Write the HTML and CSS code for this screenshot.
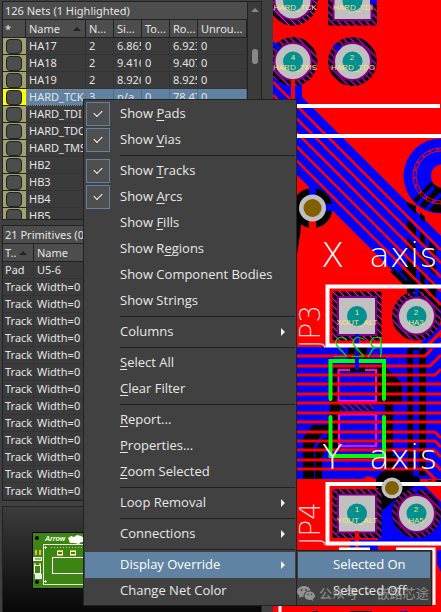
FILE: index.html
```html
<!DOCTYPE html>
<html lang="en">
<head>
<meta charset="utf-8">
<title>PCB Nets</title>
<link rel="stylesheet" href="styles.css">
</head>
<body>
<main class="app">
  <aside class="side">
    <section class="panel nets">
      <div class="nets-main">
        <h2 class="title">126 Nets (1 Highlighted)</h2>
        <table class="grid">
          <colgroup><col class="c-mark"><col class="c-name"><col class="c-num"><col class="c-num"><col class="c-num"><col class="c-num"><col></colgroup>
          <thead><tr><th>*</th><th>Name <i class="sort"></i></th><th>N...</th><th>Si...</th><th>To...</th><th>Ro...</th><th>Unrou...</th></tr></thead>
          <tbody>
            <tr><td class="mark"><input type="checkbox" aria-label="HA17"></td><td>HA17</td><td>2</td><td>6.865</td><td>0</td><td>6.923</td><td>0</td></tr>
            <tr><td class="mark"><input type="checkbox" aria-label="HA18"></td><td>HA18</td><td>2</td><td>9.416</td><td>0</td><td>9.407</td><td>0</td></tr>
            <tr><td class="mark"><input type="checkbox" aria-label="HA19"></td><td>HA19</td><td>2</td><td>8.926</td><td>0</td><td>8.925</td><td>0</td></tr>
            <tr class="selected"><td class="mark"><input type="checkbox" aria-label="HARD_TCK"></td><td>HARD_TCK</td><td>3</td><td>n/a</td><td>0</td><td>78.47</td><td>0</td></tr>
            <tr><td class="mark"><input type="checkbox" aria-label="HARD_TDI"></td><td>HARD_TDI</td><td></td><td></td><td></td><td></td><td></td></tr>
            <tr><td class="mark"><input type="checkbox" aria-label="HARD_TDO"></td><td>HARD_TDO</td><td></td><td></td><td></td><td></td><td></td></tr>
            <tr><td class="mark"><input type="checkbox" aria-label="HARD_TMS"></td><td>HARD_TMS</td><td></td><td></td><td></td><td></td><td></td></tr>
            <tr><td class="mark"><input type="checkbox" aria-label="HB2"></td><td>HB2</td><td></td><td></td><td></td><td></td><td></td></tr>
            <tr><td class="mark"><input type="checkbox" aria-label="HB3"></td><td>HB3</td><td></td><td></td><td></td><td></td><td></td></tr>
            <tr><td class="mark"><input type="checkbox" aria-label="HB4"></td><td>HB4</td><td></td><td></td><td></td><td></td><td></td></tr>
            <tr><td class="mark"><input type="checkbox" aria-label="HB5"></td><td>HB5</td><td></td><td></td><td></td><td></td><td></td></tr>
          </tbody>
        </table>
      </div>
      <div class="scroll"><i class="up"></i><i class="thumb"></i></div>
    </section>
    <section class="panel prims">
      <h2 class="title">21 Primitives (0</h2>
      <table class="grid">
        <colgroup><col class="c-type"><col></colgroup>
        <thead><tr><th>T.. <i class="sort"></i></th><th>Name</th></tr></thead>
        <tbody>
          <tr><td>Pad</td><td>U5-6</td></tr>
          <tr><td>Track</td><td>Width=0</td></tr>
          <tr><td>Track</td><td>Width=0</td></tr>
          <tr><td>Track</td><td>Width=0</td></tr>
          <tr><td>Track</td><td>Width=0</td></tr>
          <tr><td>Track</td><td>Width=0</td></tr>
          <tr><td>Track</td><td>Width=0</td></tr>
          <tr><td>Track</td><td>Width=0</td></tr>
          <tr><td>Track</td><td>Width=0</td></tr>
          <tr><td>Track</td><td>Width=0</td></tr>
          <tr><td>Track</td><td>Width=0</td></tr>
          <tr><td>Track</td><td>Width=0</td></tr>
          <tr><td>Track</td><td>Width=0</td></tr>
          <tr><td>Track</td><td>Width=0</td></tr>
        </tbody>
      </table>
    </section>
    <section class="panel preview">
      <svg class="board" width="200" height="58" viewBox="0 0 200 58" aria-hidden="true">
        <rect x=".5" y=".5" width="199" height="56" fill="#3c8512" stroke="#000"/>
        <circle cx="5" cy="6" r="2"/><circle cx="5" cy="50" r="2"/>
        <text x="13" y="9" class="brand">Arrow</text>
        <path d="M36 6l3-2 3 1 3-2 4 1 4 2 4 2-3 2-5 0-2 2-5-1-4 0z" fill="#fff"/>
        <rect x="11.500" y="12.500" width="180" height="40" fill="none" stroke="#e8efe2"/>
        <path d="M19 15.500h180" stroke="#b5cfa3" stroke-dasharray="1 2"/>
        <path d="M12 15.500h3M13.500 14v3M12 49.500h3M13.500 48v3" stroke="#d3e2c8"/>
        <rect x="20.500" y="25.500" width="160" height="16" fill="none" stroke="#fff"/>
        <g fill="#e8efe2"><rect x="25" y="18" width="6" height="6"/><rect x="38" y="18" width="6" height="6"/><rect x="1" y="25" width="9" height="4"/><rect x="3" y="42" width="7" height="5"/></g>
        <g fill="#f2b63a"><path d="M25 18h6v1h-6zM25 23h6v1h-6zM38 18h6v1h-6zM38 23h6v1h-6zM3 18h2v5h-2zM7 18h2v5h-2zM2 31h2v2h-2zM7 31h2v2h-2z"/></g>
        <rect x="26" y="20" width="4" height="2" fill="#3c8512"/><rect x="39" y="20" width="4" height="2" fill="#3c8512"/>
        <rect x="2.500" y="33.500" width="6" height="8" fill="none" stroke="#fff"/><path d="M3 27h6" stroke="#3c8512"/>
      </svg>
    </section>
  </aside>
  <section class="canvas" aria-label="PCB layout">
    <svg class="pcb" viewBox="273 0 168 612" preserveAspectRatio="xMinYMin slice">
      <defs>
        <pattern id="h" width="7" height="7" patternUnits="userSpaceOnUse"><rect width="7" height="7" fill="#000"/><path d="M-1-1l9 9M-1 6l2 2M6-1l2 2" stroke="#ff00ff" stroke-width="1.200"/></pattern>
        <g id="round"><circle r="24.500" fill="url(#h)"/><circle r="19.500" fill="#800080"/><circle r="17.500" fill="#c0c0c0"/><circle r="10" fill="#009090"/></g>
        <g id="square"><rect x="-24.500" y="-24.500" width="49" height="49" fill="url(#h)"/><rect x="-20" y="-20" width="40" height="40" fill="#800080"/><rect x="-18" y="-18" width="36" height="36" fill="#c0c0c0"/><circle r="10" fill="#009090"/></g>
      </defs>
      <rect x="273" width="168" height="612" fill="#f00"/>

      <!-- diagonal bus -->
      <path d="M273 42l7 2 6 8-4 4-9-8zM273 77l10 7h19v13l139 139v83L273 151z" fill="#00f"/>
      <path d="M293 76v24" stroke="#f00" stroke-width="4"/>
      <path d="M273 82l168 168M273 95l168 168M273 109l168 168M273 123l168 168M273 137l168 168" stroke="#f00" stroke-width="2.500"/>
      <path d="M407 202l9 4v96h-9zM420 212l5 5v85h-5zM429 226l7 8v70h-7z"/>
      <path d="M402 270l39 39M392 270l49 49" stroke="#000" stroke-width="5"/>
      <path d="M402 200l39 39v14l-39-39zM402 224l39 39v8l-39-39zM402 242l39 39v8l-39-39z" fill="#00f"/>
      <path d="M402 211l39 39M402 224l39 39M402 238l39 39M402 252l39 39M402 266l39 39" stroke="#f00" stroke-width="2.500"/>

      <!-- mounting hole -->
      <circle cx="441" cy="176" r="37.500" fill="#00f"/>
      <path d="M413 200l18-18 10 5v26q-15-1-28-13z"/>
      <path d="M417 205l17-18M426 210l15-16" stroke="#00f" stroke-width="4"/>
      <circle cx="441" cy="176" r="28" fill="none" stroke="#f00"/><circle cx="441" cy="176" r="25" fill="none" stroke="#f00"/>
      <circle cx="441" cy="176" r="26.500" fill="none" stroke="#f00" stroke-width="2" stroke-dasharray="2 6"/>
      <circle cx="443" cy="176" r="12" fill="#f00"/>

      <use href="#round" x="293" y="1"/><use href="#square" x="352.500" y="1"/>
      <path d="M370 0h7v4h-7z" fill="#00f"/>
      <use href="#round" x="293" y="61.500"/><use href="#round" x="352.500" y="61.500"/>
      <path d="M336 43l5 5-3 3-5-5zM273 43l4 0 4 5-3 3-5-5z" fill="#00f"/>
      <path d="M293 79v20" stroke="#f00" stroke-width="4"/>
      <g class="pin"><text x="295" y="10">HARD_TCK</text><text x="353" y="10">HARD_TDI</text><text x="293" y="60">4</text><text x="295" y="70">HARD_TMS</text><text x="352" y="60">2</text><text x="353" y="70">HARD_TDO</text></g>
      <path d="M273 106h167M273 136h168" stroke="#fff" stroke-width="4"/>

      <!-- via -->
      <path d="M297 195v59l4-26z"/>
      <circle cx="312.500" cy="208" r="20"/>
      <path d="M309 186h7v10h-7zM325 204h13v7h-13z" fill="#00f"/><path d="M309 221h7v8h-7z" fill="#f00"/>
      <circle cx="312.500" cy="208" r="13.500" fill="#c0c0c0"/><circle cx="312.500" cy="208" r="9" fill="#806000"/>

      <g class="silk"><text x="321" y="267">X</text><text x="369" y="267">axis</text></g>

      <!-- horizontal bus -->
      <path d="M273 347h168v132h-65l-8-3-5 3h-90z" fill="#00f"/>
      <path d="M348 346h19v14h-19zM334 366h50l18 17v20h-9v73h-8v-71h-9v-9h-36v54h-14zM407 350l5-5h14v131h-6l-12-5zM420 350h6v120h-6zM303 479v-41l10-13h20v8h-10l-9 12v34zM315 450l8-12h6v10l-7 8v23h-7zM376 479q4-8 13-9v-14h7v14h14l10 9v9h-44z"/>
      <path d="M413 350h6v126h-6z" fill="#00f"/>
      <path d="M340 372h34v28h-34zM340 415h34v29h-34z" fill="#00f"/>
      <rect x="340" y="404" width="34" height="7" fill="url(#h)" opacity=".6"/>
      <g fill="none" stroke="#f0f" stroke-width="2"><path d="M350 370h-11.500v31h37.500v-31h-11M339 414.500h37v31.500h-37z"/></g>
      <path d="M297 356h128l16-16M297 366h133l11-11M297 375h138l6-6M297 384h144M297 394h144M297 403h144M297 413h144M297 422h144M297 432h138l6 6M297 441h138l6 6M297 450h137l7 7M297 460h134l10 10M297 469h128l16 16" fill="none" stroke="#f00" stroke-width="3"/>
      <path d="M330.500 399v-38h53.500v38M330.500 417v39h53.500v-39" fill="none" stroke="#0f0" stroke-width="4" stroke-linecap="round"/>
      <g class="silk"><text x="322" y="469">Y</text><text x="369" y="469">axis</text></g>

      <!-- JP3 -->
      <path d="M441 326l-22 22M441 338l-10 10" stroke="#00f" stroke-width="5"/>
      <use href="#square" x="357" y="316"/><use href="#round" x="416.500" y="316"/>
      <path d="M416.500 286v11" stroke="#00f" stroke-width="3"/>
      <path d="M357 334v36" stroke="#00f" stroke-width="4"/>
      <path d="M450 286.500H327.500v59H450" fill="none" stroke="#fff" stroke-width="4"/>
      <g class="pin"><text x="357" y="315">1</text><text x="357" y="325">XOUT_ALT</text><text x="416" y="315">2</text><text x="416" y="325">HA3</text></g>
      <text class="ref" transform="translate(320 348) rotate(-90)">JP3</text>
      <text class="mirror" transform="scale(-1 1)" x="-385" y="357">R22</text>

      <!-- JP4 -->
      <path d="M378 486h63v57h-63z" fill="#00f"/>
      <path d="M378 486h36l-24 18-12 10zM428 480h13v12z"/>
      <path d="M425 486l16 16v-17l-8-6z" fill="#f00"/>
      <use href="#square" x="357" y="513.500"/><use href="#round" x="416.500" y="513.500"/>
      <path d="M416.500 483v11" stroke="#00f" stroke-width="3"/>
      <path d="M350 540h28v10h-28z" fill="#00f"/>
      <path d="M357 531v18" stroke="#f00" stroke-width="4"/>
      <path d="M450 484H327.500v59.500H450" fill="none" stroke="#fff" stroke-width="4"/>
      <circle cx="392" cy="488" r="10.500" fill="#c0c0c0"/><circle cx="392" cy="488" r="7" fill="#806000"/>
      <g class="pin"><text x="357" y="512">1</text><text x="357" y="523">YOUT_ALT</text><text x="416" y="512">2</text><text x="416" y="523">HA5</text></g>
      <text class="ref" transform="translate(320 545) rotate(-90)">JP4</text>

      <path d="M437 550h4v22l-4-8z" fill="#00f"/>
      <path d="M339 549h31M396 549h38v56M280 604v8" fill="none" stroke="#fff" stroke-width="3"/>
      <path d="M312 611h6v1h-6zM350 611h22v1h-22z"/><path d="M400 611h8v1h-8z" fill="#00f"/>
    </svg>
  </section>

  <menu class="menu main-menu">
    <li><button class="checked"><span>Show <u>P</u>ads</span></button></li>
    <li><button class="checked"><span>Show <u>V</u>ias</span></button></li>
    <li class="sep"></li>
    <li><button class="checked"><span>Show <u>T</u>racks</span></button></li>
    <li><button class="checked"><span>Show <u>A</u>rcs</span></button></li>
    <li><button><span>Show <u>F</u>ills</span></button></li>
    <li><button><span>Show R<u>e</u>gions</span></button></li>
    <li><button><span>Show Component Bodies</span></button></li>
    <li><button><span>Show Strings</span></button></li>
    <li class="sep"></li>
    <li><button class="more"><span>Columns</span></button></li>
    <li class="sep"></li>
    <li><button><span><u>S</u>elect All</span></button></li>
    <li><button><span><u>C</u>lear Filter</span></button></li>
    <li class="sep"></li>
    <li><button><span><u>R</u>eport...</span></button></li>
    <li><button><span><u>P</u>roperties...</span></button></li>
    <li><button><span><u>Z</u>oom Selected</span></button></li>
    <li class="sep"></li>
    <li><button class="more"><span>Loop Removal</span></button></li>
    <li class="sep"></li>
    <li><button class="more"><span>Connections</span></button></li>
    <li class="sep"></li>
    <li><button class="more active"><span>Display Override</span></button></li>
    <li><button><span>Change Net Color</span></button></li>
  </menu>
  <menu class="menu sub-menu">
    <li><button class="active"><span>Selected On</span></button></li>
    <li><button><span>Selected Off</span></button></li>
  </menu>
  <div class="watermark" lang="zh">
    <svg width="18" height="15" viewBox="0 0 18 15" aria-hidden="true"><path d="M7 0C3 0 0 2.500 0 5.500c0 2 1 3.200 2.500 4.200L2 12l2.600-1.300 2 .3C6 7 9 4.500 13.500 4.500 13 2 10.500 0 7 0zM12.500 5.500c-3 0-5 2-5 4.300s2.200 4.200 5 4.200l1.700-.2 2 1.200-.5-1.800C17 12.300 18 11.200 18 9.800c0-2.300-2.300-4.300-5.500-4.300z" fill="currentColor"/><g fill="#414141"><circle cx="4.500" cy="4" r=".9"/><circle cx="9" cy="4" r=".9"/><circle cx="11" cy="8.500" r=".8"/><circle cx="14.500" cy="8.500" r=".8"/></g></svg>
    <span>公众号 · 嵌路芯途</span>
  </div>
</main>
</body>
</html>
```
FILE: styles.css
```css
*, *::before, *::after { box-sizing: border-box; }

body {
  margin: 0;
  background: #404040;
  color: #e4e4e4;
  font: 11px/16px "Noto Sans", "Open Sans", sans-serif;
}

.app {
  position: relative;
  display: grid;
  grid-template-columns: 273px 1fr;
  height: 100vh;
  overflow: hidden;
}

.side {
  display: flex;
  flex-direction: column;
  gap: 5px;
  min-height: 0;
  padding: 1px 11px 0 2px;
}

.panel {
  border: 1px solid #222;
  background: #3b3b3b;
  overflow: hidden;
}

.nets { display: flex; flex: 0 0 219px; }
.nets-main { flex: 1; min-width: 0; }
.prims { flex: none; }

.title {
  margin: 0;
  padding: 0 2px;
  height: 18px;
  border-bottom: 1px solid #222;
  background: #4d4d4d;
  font-size: 11px;
  font-weight: 400;
  line-height: 17px;
  white-space: nowrap;
}

.grid {
  width: 100%;
  table-layout: fixed;
  border-collapse: separate;
  border-spacing: 0;
}

.c-mark { width: 23px; }
.c-name { width: 60px; }
.c-num { width: 28px; }
.c-type { width: 31px; }

th, td {
  height: 17px;
  padding: 0 0 0 2px;
  overflow: hidden;
  border-right: 1px solid #343434;
  border-bottom: 1px solid #343434;
  font-weight: 400;
  line-height: 16px;
  text-align: left;
  white-space: nowrap;
}

td + td, th + th { padding-left: 3px; }

th {
  height: 18px;
  border-right-color: #222;
  border-bottom-color: #222;
  background: #4d4d4d;
}

.sort {
  display: inline-block;
  margin: 0 0 2px 10px;
  border: 4px solid transparent;
  border-top: 0;
  border-bottom-color: #222;
}

.prims .sort { margin-left: 0; }

.mark { padding: 0 4px 0 3px; background: #a0a070; }
td.mark { border-right: 0; border-bottom-color: #222; }

.mark input {
  display: block;
  appearance: none;
  width: 16px;
  height: 15px;
  margin: 0;
  border: 1px solid #222;
  border-radius: 4px;
  background: #4d4d4d;
}

.selected td { background: #6082a3; border-right-color: #4f6c88; }
.selected td.mark { background: #ff0; }
.selected td:nth-child(2) { outline: 1px dotted #a08870; outline-offset: -1px; }

.scroll {
  display: flex;
  flex: 0 0 14px;
  flex-direction: column;
  align-items: center;
  padding: 6px 0 0 1px;
  border-left: 1px solid #222;
}

.up { border: 4px solid transparent; border-top: 0; border-bottom-color: #888; }
.thumb { width: 6px; height: 15px; margin-top: 37px; border-radius: 3px; background: #888; }

.preview {
  flex: 1;
  padding: 25px 0 0 29px;
  border-bottom: 0;
  background: linear-gradient(#3c3c3c, #080808);
}

.board { display: block; }
.brand { fill: #fff; font: italic 700 7px "Liberation Sans", sans-serif; }

.canvas { min-width: 0; overflow: hidden; }
.pcb { display: block; width: 100%; height: 100%; }
.pin { fill: #ffe080; font: 8px "Liberation Sans", sans-serif; text-anchor: middle; }
.silk { fill: #fff; font: 200 34px "DejaVu Sans", sans-serif; }
.ref { fill: #ffd0d0; font: 200 28px "DejaVu Sans", sans-serif; }
.mirror { fill: #00d000; font: 200 27px "DejaVu Sans", sans-serif; }

.menu {
  position: absolute;
  margin: 0;
  padding: 1px;
  border: 1px solid #222;
  background: #414141;
  list-style: none;
}

.main-menu { top: 99px; left: 83px; width: 214px; }
.sub-menu { top: 550px; left: 296px; width: 136px; }

.menu button {
  display: flex;
  align-items: center;
  width: 100%;
  height: 26px;
  padding: 0 10px 0 35px;
  border: 0;
  background: none;
  color: #e8e8e8;
  font: 13px/20px "Open Sans", "Noto Sans", sans-serif;
  text-align: left;
  white-space: nowrap;
}

.menu span { padding-bottom: 2px; }
.menu u { text-decoration: underline 1px #e8e8e8; text-underline-offset: 2px; text-decoration-skip-ink: none; }
.menu .active { background: #6082a3; color: #fff; }

.menu .checked { position: relative; padding-left: 1px; }

.checked::before {
  content: "";
  width: 24px;
  height: 24px;
  margin-right: 10px;
  border: 1px solid #6082a3;
  background: #4f4f4f;
}

.checked::after {
  content: "";
  position: absolute;
  top: 9px;
  left: 9px;
  width: 8px;
  height: 5px;
  border: solid #fff;
  border-width: 0 0 1px 1px;
  transform: rotate(-45deg);
}

.more::after {
  content: "";
  margin-left: auto;
  border: 4px solid transparent;
  border-right: 0;
  border-left-color: #f0f0f0;
}

.sep { height: 5px; margin-left: 35px; border-bottom: 2px solid transparent; box-shadow: inset 0 -1px #222; }

.watermark {
  position: absolute;
  top: 583px;
  left: 297px;
  display: flex;
  align-items: center;
  gap: 4px;
  color: #c8c8c8;
  font: 13px/20px "Noto Sans CJK SC", sans-serif;
  opacity: .6;
  white-space: nowrap;
  pointer-events: none;
}
```
